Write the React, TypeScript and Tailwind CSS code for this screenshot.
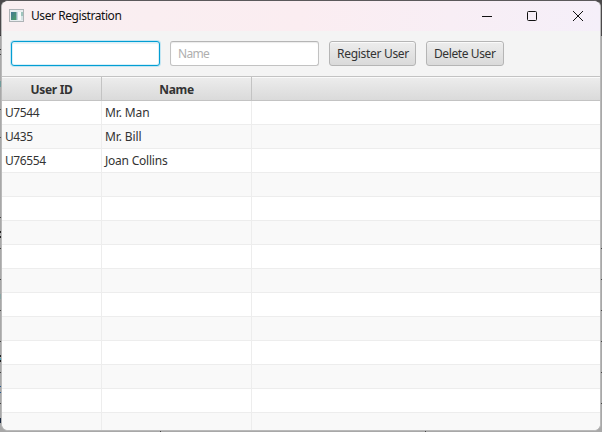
const users = [
  { id: "U7544", name: "Mr. Man", nameTrack: "tracking-[-0.12px]" },
  { id: "U435", name: "Mr. Bill", nameTrack: "tracking-[-0.12px]" },
  { id: "U76554", name: "Joan Collins", nameTrack: "tracking-[-0.22px]" },
];
const rows = Array.from({ length: 14 }, (_, i) => users[i]);

// Specks of the desktop that show along the window's left and right edges.
const leftMarks = [
  { y: 35, h: 1, c: "#333" }, { y: 49, h: 1, c: "#333" }, { y: 54, h: 1, c: "#444" },
  { y: 81, h: 6, c: "#719c9b" }, { y: 109, h: 1, c: "#555" }, { y: 137, h: 1, c: "#555" },
  { y: 217, h: 1, c: "#444" }, { y: 231, h: 2, c: "#222" }, { y: 236, h: 2, c: "#222" },
  { y: 248, h: 1, c: "#444" }, { y: 279, h: 1, c: "#444" }, { y: 294, h: 5, c: "#8aa5a4" },
  { y: 310, h: 1, c: "#444" }, { y: 341, h: 1, c: "#444" }, { y: 355, h: 2, c: "#222" },
  { y: 358, h: 2, c: "#4d9fb5" }, { y: 360, h: 2, c: "#222" }, { y: 372, h: 1, c: "#444" },
  { y: 386, h: 1, c: "#245a91" }, { y: 392, h: 1, c: "#245a91" }, { y: 403, h: 1, c: "#444" },
  { y: 418, h: 5, c: "#1b2940" },
];

function AppIcon() {
  return (
    <svg className="mb-[2px] block h-[13px] w-[15px]" viewBox="0 0 15 13" shapeRendering="crispEdges">
      <defs>
        <linearGradient id="pane" x1="0" y1="0" x2="1" y2="1">
          <stop offset="0" stopColor="#437796" />
          <stop offset="1" stopColor="#4c9f67" />
        </linearGradient>
      </defs>
      <rect width="15" height="13" fill="#aeb3b6" />
      <rect x="1" y="1" width="13" height="11" fill="#e9eef0" />
      <rect x="2" y="3" width="5" height="8" fill="url(#pane)" />
      <rect x="7" y="3" width="1" height="8" fill="#8fb5b5" />
      <rect x="8" y="3" width="1" height="8" fill="#c6d5df" />
      <rect x="9" y="3" width="3" height="8" fill="#f7f9f9" />
      <rect x="12" y="3" width="2" height="4" fill="#9fc5bd" />
      <rect x="12" y="7" width="2" height="4" fill="#d7e4e5" />
    </svg>
  );
}

function TitleBar() {
  return (
    <header className="flex h-[30px] shrink-0 items-center bg-linear-to-r from-[#f9eff1] via-[#fbedf1] to-[#f5eff9] pl-[7px]">
      <AppIcon />
      <h1 className="ml-[7px] text-[12px] leading-[16px] tracking-[-0.43px] text-[#111]">User Registration</h1>
      <div className="ml-auto flex items-center pr-[16px]">
        <svg className="h-3 w-3" viewBox="0 0 12 12" stroke="#111"><path d="M1 6.5H11" /></svg>
        <svg className="ml-[33px] h-3 w-3" viewBox="0 0 12 12" fill="none" stroke="#111"><rect x="1.5" y="1.5" width="9" height="9" rx="1" /></svg>
        <svg className="ml-[34px] h-3 w-3" viewBox="0 0 12 12" stroke="#111"><path d="M1 1L11 11M11 1L1 11" /></svg>
      </div>
    </header>
  );
}

function ActionButton({ label, className }: { label: string; className: string }) {
  return (
    <button className={`h-[25px] shrink-0 rounded-[3px] border border-[#b5b5b5] bg-linear-to-b from-[#ededed] to-[#dadada] pl-[7px] text-left text-[12px] leading-[23px] whitespace-nowrap text-[#333] shadow-[inset_0_1px_0_#fafafa] ${className}`}>
      {label}
    </button>
  );
}

function Toolbar() {
  return (
    <div className="flex h-[45px] shrink-0 items-start gap-[10px] bg-[#f4f4f4] pt-[10px] pl-[9px]">
      <input className="h-[25px] w-[149px] shrink-0 rounded-[3px] border border-[#039ed3] bg-white px-[7px] text-[12px] shadow-[0_0_0_1px_#c3e6f3,inset_0_0_0_1px_#d9f0f8,inset_0_2px_1px_#e8f2f6] outline-none" />
      <input
        className="h-[25px] w-[149px] shrink-0 rounded-[3px] border border-[#c2c2c2] border-t-[#b5b5b5] bg-white px-[7px] text-[12px] tracking-[-0.7px] shadow-[inset_0_1px_1px_#ececec] outline-none placeholder:text-[#afafaf] placeholder:opacity-100"
        placeholder="Name"
      />
      <ActionButton label="Register User" className="w-[87px] tracking-[-0.3px]" />
      <ActionButton label="Delete User" className="w-[78px] tracking-[-0.4px]" />
    </div>
  );
}

function UserTable() {
  return (
    <div className="min-h-0 flex-1 overflow-hidden text-[12px] text-[#333]">
      <div className="grid h-[25px] grid-cols-[100px_150px_1fr] border-y border-[#c3c3c3] bg-linear-to-b from-[#ededed] to-[#dadada] text-center leading-[25px] font-bold shadow-[inset_0_1px_0_#fafafa]">
        <div className="border-r border-[#c3c3c3] tracking-[-0.3px]">User ID</div>
        <div className="border-r border-[#c3c3c3] tracking-[-0.3px]">Name</div>
        <div />
      </div>
      {rows.map((user, i) => (
        <div key={i} className="grid h-[24px] grid-cols-[100px_150px_1fr] border-b border-[#ededed] leading-[24px] odd:bg-[#f9f9f9] even:bg-white">
          <div className="border-r border-[#ededed] pl-[3px] tracking-[-0.4px]">{user?.id}</div>
          <div className={`border-r border-[#ededed] pl-[3px] ${user?.nameTrack ?? ""}`}>{user?.name}</div>
          <div />
        </div>
      ))}
    </div>
  );
}

export default function App() {
  return (
    <div className="relative h-[432px] w-[602px] overflow-hidden bg-linear-to-b from-[#4b494b] from-[35px] to-[#a8a8a8] to-[36px] font-['Noto_Sans','Open_Sans',sans-serif]">
      {leftMarks.map((m) => (
        <i key={m.y} className="absolute left-0 w-px" style={{ top: m.y, height: m.h, background: m.c }} />
      ))}
      {[35, 248, 279, 310, 341, 372, 403].map((y) => (
        <i key={y} className="absolute right-0 h-px w-px bg-[#444]" style={{ top: y }} />
      ))}
      <i className="absolute bottom-0 left-[160px] h-px w-px bg-[#444]" />
      <i className="absolute bottom-0 left-[425px] h-px w-px bg-[#444]" />
      <main className="relative mx-px flex h-[431px] flex-col overflow-hidden rounded-[7px] border border-[#b9b9b9] border-t-[#5b595b] bg-white">
        <TitleBar />
        <Toolbar />
        <UserTable />
      </main>
    </div>
  );
}
